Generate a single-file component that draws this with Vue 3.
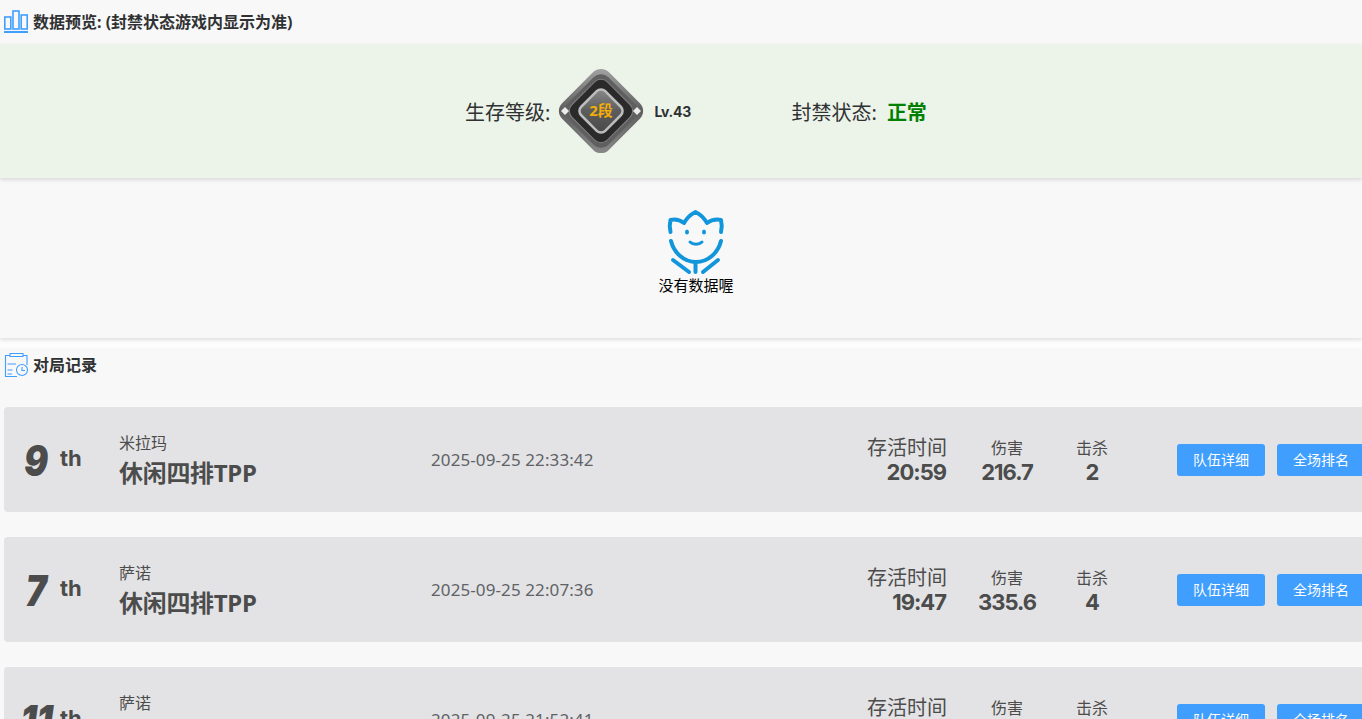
<script setup>
const matches = [
  { rank: 9, map: "米拉玛", mode: "休闲四排TPP", date: "2025-09-25 22:33:42", time: "20:59", damage: "216.7", kills: 2 },
  { rank: 7, map: "萨诺", mode: "休闲四排TPP", date: "2025-09-25 22:07:36", time: "19:47", damage: "335.6", kills: 4 },
  { rank: 11, map: "萨诺", mode: "休闲四排TPP", date: "2025-09-25 21:52:41", time: "18:20", damage: "120.4", kills: 1 },
];
</script>

<template>
  <div class="page">
    <div class="title-row preview-title">
      <svg class="title-icon" width="24" height="24" viewBox="0 0 24 24" fill="none" stroke="#409eff" stroke-width="1.6">
        <rect x="0.8" y="8" width="6" height="12" />
        <rect x="9" y="2" width="6" height="18" />
        <rect x="17.2" y="6" width="6" height="14" />
        <path d="M0 23h24" stroke-width="2" />
      </svg>
      <span>数据预览: (封禁状态游戏内显示为准)</span>
    </div>

    <div class="status-panel">
      <div class="status-item level">
        <span class="status-label">生存等级:</span>
        <svg class="badge" width="88" height="88" viewBox="0 0 88 88">
          <defs>
            <linearGradient id="outer" x1="0" y1="0" x2="1" y2="1">
              <stop offset="0" stop-color="#a8a8a8" />
              <stop offset="0.5" stop-color="#5e5e5e" />
              <stop offset="1" stop-color="#8c8c8c" />
            </linearGradient>
            <linearGradient id="inner" x1="0" y1="0" x2="1" y2="1">
              <stop offset="0" stop-color="#8e8e8e" />
              <stop offset="0.5" stop-color="#5c5c5c" />
              <stop offset="1" stop-color="#474747" />
            </linearGradient>
          </defs>
          <rect x="11" y="11" width="66" height="66" rx="11" transform="rotate(45 44 44)" fill="url(#outer)" />
          <rect x="15" y="15" width="58" height="58" rx="10" transform="rotate(45 44 44)" fill="#5f5f5f" />
          <rect x="19" y="19" width="50" height="50" rx="9" transform="rotate(45 44 44)" fill="#2a2a2a" stroke="#808080" stroke-width="1" />
          <rect x="27" y="27" width="34" height="34" rx="6" transform="rotate(45 44 44)" fill="url(#inner)" stroke="#bdbdbd" stroke-width="2.5" />
          <path d="M4 44l4-4 4 4-4 4zM84 44l-4-4-4 4 4 4z" fill="#ececec" />
          <text x="44" y="49" text-anchor="middle" class="badge-text">2段</text>
        </svg>
        <span class="level-text">Lv.43</span>
      </div>
      <div class="status-item ban">
        <span class="status-label">封禁状态:</span>
        <span class="ban-value">正常</span>
      </div>
    </div>

    <div class="empty-panel">
      <svg width="60" height="68" viewBox="0 0 60 68" fill="none" stroke="#1296db" stroke-width="4" stroke-linecap="round" stroke-linejoin="round">
        <path d="M4.500 24 C3.500 20 3.500 16 4.500 12 C9 11 14 12 18 15 C21 10 25 6 29.500 4 C34 6 38 10 41 15 C45 12 50 11 55 12 C56 16 56 20 55 24" />
        <path d="M5 33 C8 45 18 54 30 54 C42 54 52 45 55 33" />
        <path d="M29.500 54V64M7 52L23 64M52 52L37 64" />
        <path d="M24 34 C27 37 33 37 36 34" stroke-width="3" />
        <ellipse cx="21" cy="24" rx="2" ry="2.500" fill="#1296db" stroke="none" />
        <ellipse cx="38" cy="24" rx="2" ry="2.500" fill="#1296db" stroke="none" />
      </svg>
      <div class="empty-text">没有数据喔</div>
    </div>

    <div class="records">
      <div class="title-row records-title">
        <svg class="title-icon" width="24" height="26" viewBox="0 0 24 26" fill="none" stroke="#409eff" stroke-width="1.1">
          <path d="M13 25.500H1.500V4.500H6M19 4.500H23V14" />
          <path d="M6 2.500h13v3H6z" />
          <path d="M3.500 13h8.500M3.500 19h5M3.500 23h4.500" />
          <circle cx="18" cy="19" r="5.500" />
          <path d="M18 16v3.500h3" />
        </svg>
        <span>对局记录</span>
      </div>

      <div class="match-list">
        <div v-for="m in matches" :key="m.date" class="match-row">
          <div class="rank">
            <span class="rank-num">{{ m.rank }}</span>
            <span class="rank-th">th</span>
          </div>
          <div class="mode">
            <div class="map-name">{{ m.map }}</div>
            <div class="mode-name">{{ m.mode }}</div>
          </div>
          <div class="date">{{ m.date }}</div>
          <div class="stat survive">
            <div class="stat-label big">存活时间</div>
            <div class="stat-value">{{ m.time }}</div>
          </div>
          <div class="stat damage">
            <div class="stat-label">伤害</div>
            <div class="stat-value">{{ m.damage }}</div>
          </div>
          <div class="stat kills">
            <div class="stat-label">击杀</div>
            <div class="stat-value">{{ m.kills }}</div>
          </div>
          <div class="actions">
            <button class="btn">队伍详细</button>
            <button class="btn">全场排名</button>
          </div>
        </div>
      </div>
    </div>
  </div>
</template>

<style scoped>
.page {
  width: 1362px;
  height: 719px;
  overflow: hidden;
  background: #fdfdfd;
  font-family: "Noto Sans", "Noto Sans CJK SC", sans-serif;
  color: #303133;
}

.title-row {
  display: flex;
  align-items: center;
  gap: 5px;
  padding-left: 4px;
  font-size: 16px;
  font-weight: 700;
}

.preview-title {
  height: 44px;
  padding-bottom: 3px;
  box-sizing: border-box;
  background: #f8f8f8;
}

.title-icon {
  flex: none;
}

.status-panel {
  height: 134px;
  background: #ecf4e9;
  box-shadow: 0 2px 4px rgba(0, 0, 0, 0.12);
  display: flex;
  align-items: center;
  position: relative;
}

.status-item {
  display: flex;
  align-items: center;
}

.level {
  margin-left: 465px;
  width: 326.5px;
}

.status-label {
  font-size: 20px;
}

.badge {
  margin: 0 9px 0 7px;
}

.badge-text {
  font-size: 15px;
  font-weight: 700;
  fill: #f4ad08;
}

.level-text {
  font-family: "Inter", sans-serif;
  font-size: 14px;
  font-weight: 700;
  letter-spacing: -0.3px;
}

.ban-value {
  margin-left: 10px;
  font-size: 20px;
  font-weight: 700;
  color: #008000;
}

.empty-panel {
  height: 160px;
  padding: 30px 0 0 30px;
  box-sizing: border-box;
  display: flex;
  flex-direction: column;
  align-items: center;
  background: #f8f8f8;
  box-shadow: 0 2px 4px rgba(0, 0, 0, 0.12);
}

.empty-text {
  font-size: 15px;
  color: #000;
  line-height: 19px;
}

.records {
  margin-top: 10px;
  background: #f8f8f8;
  padding-bottom: 40px;
}

.records-title {
  height: 32px;
}

.match-list {
  padding: 27px 0 0 4px;
  display: flex;
  flex-direction: column;
  gap: 25px;
}

.match-row {
  flex: none;
  width: 1400px;
  height: 105px;
  box-sizing: border-box;
  background: #e3e3e5;
  border-radius: 4px;
  display: flex;
  align-items: center;
  color: #4c4c4c;
}

.rank {
  width: 115px;
  padding-left: 14px;
  box-sizing: border-box;
  display: flex;
  align-items: center;
  font-family: "Inter", sans-serif;
}

.rank-num {
  width: 36px;
  flex: none;
  font-size: 42px;
  font-weight: 900;
  font-style: italic;
  white-space: nowrap;
  text-align: center;
  margin-top: 1px;
  transform: scaleX(0.85);
}

.rank-th {
  font-size: 22px;
  font-weight: 700;
  margin-left: 6px;
  margin-bottom: 4px;
}

.mode {
  width: 312px;
  padding-top: 3px;
}

.map-name {
  font-size: 16px;
  line-height: 24px;
}

.mode-name {
  font-size: 24px;
  font-weight: 700;
  line-height: 36px;
  letter-spacing: -0.3px;
}

.date {
  width: 436px;
  font-size: 17px;
  letter-spacing: 0.1px;
  color: #606266;
}

.stat {
  text-align: center;
  padding-top: 1px;
}

.survive {
  width: 80px;
  text-align: right;
}

.survive .stat-value {
  margin-right: 1px;
}

.damage {
  width: 70px;
  margin-left: 25px;
}

.kills {
  width: 34px;
  margin-left: 33px;
}

.stat-label {
  font-size: 16px;
  line-height: 22px;
}

.stat-label.big {
  font-size: 20px;
}

.stat-value {
  margin-top: 1px;
  font-family: "Inter", sans-serif;
  font-size: 22px;
  font-weight: 700;
  line-height: 24px;
  letter-spacing: -1px;
}

.actions {
  margin-left: 68px;
  display: flex;
  gap: 12px;
}

.btn {
  width: 88px;
  height: 32px;
  padding: 0 0 2px;
  border: none;
  border-radius: 3px;
  background: #409eff;
  color: #fff;
  font-family: inherit;
  font-size: 14px;
}
</style>
